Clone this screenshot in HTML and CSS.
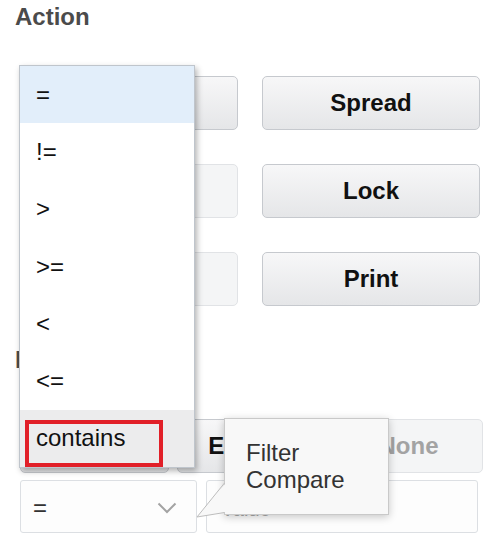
FILE: index.html
```html
<!DOCTYPE html>
<html lang="en">
<head>
<meta charset="utf-8">
<title>Action</title>
<link rel="stylesheet" href="styles.css">
</head>
<body>
<div class="page">
  <h2 class="heading">Action</h2>
  <div class="action-grid">
    <button class="btn">Run</button>
    <button class="btn">Spread</button>
    <button class="btn" disabled>Edit</button>
    <button class="btn">Lock</button>
    <button class="btn" disabled>Copy</button>
    <button class="btn">Print</button>
  </div>

  <h2 class="heading heading-second">Filter</h2>
  <div class="filter-buttons">
    <button class="btn">All</button>
    <button class="btn">Expand</button>
    <button class="btn" disabled>None</button>
  </div>
  <div class="filter-inputs">
    <div class="select">
      <span class="select-value">=</span>
      <svg class="chevron" width="20" height="12" viewBox="0 0 20 12"><polyline points="1.5,1.5 10,10 18.5,1.5" fill="none" stroke="#a3a3a3" stroke-width="2"/></svg>
    </div>
    <input class="text-input" type="text" placeholder="Value">
  </div>

  <ul class="dropdown">
    <li class="option option-active">=</li>
    <li class="option">!=</li>
    <li class="option">&gt;</li>
    <li class="option">&gt;=</li>
    <li class="option">&lt;</li>
    <li class="option">&lt;=</li>
    <li class="option option-hover">contains<span class="mark"></span></li>
  </ul>

  <svg class="tail" width="34" height="40" viewBox="0 0 34 40">
    <polygon points="31,3 2,37 31,32" fill="#f8f8f8"/>
    <polyline points="29.5,3 2,37 29.5,32.5" fill="none" stroke="#bdbdbd" stroke-width="1"/>
  </svg>
  <div class="tooltip">Filter<br>Compare</div>
</div>
</body>
</html>
```
FILE: styles.css
```css
html, body {
  margin: 0;
  padding: 0;
  background: #ffffff;
}

body {
  font-family: "Liberation Sans", Arial, Helvetica, sans-serif;
}

.page {
  position: relative;
  padding-top: 3px;
}

.heading {
  margin: 0;
  padding-left: 15px;
  font-size: 24px;
  line-height: 28px;
  font-weight: bold;
  color: #4b4b4b;
}

.heading-second {
  margin-top: 40px;
}

.action-grid {
  display: grid;
  grid-template-columns: 218px 218px;
  column-gap: 24px;
  row-gap: 34px;
  margin: 45px 0 0 20px;
}

.btn {
  box-sizing: border-box;
  height: 54px;
  margin: 0;
  padding: 0;
  border: 1px solid #c6c9ce;
  border-radius: 5px;
  background: linear-gradient(#f7f7f8, #e5e6e8);
  font-family: "Liberation Sans", Arial, Helvetica, sans-serif;
  font-size: 24px;
  font-weight: bold;
  color: #111111;
}

.btn:disabled {
  background: #f4f5f6;
  border-color: #e1e3e6;
  color: #a3a3a3;
}

.filter-buttons {
  display: flex;
  gap: 8px;
  width: 463px;
  margin: 45px 0 0 20px;
}

.filter-buttons .btn {
  flex: 1;
}

.filter-inputs {
  display: flex;
  gap: 9px;
  margin: 7px 0 0 20px;
}

.select {
  box-sizing: border-box;
  width: 177px;
  height: 53px;
  border: 1px solid #dcdfe3;
  border-radius: 3px;
  background: #fdfdfd;
  display: flex;
  align-items: center;
  justify-content: space-between;
  padding: 3px 19px 0 12px;
}

.select-value {
  font-size: 24px;
  color: #333333;
}

.chevron {
  display: block;
}

.text-input {
  box-sizing: border-box;
  width: 272px;
  height: 53px;
  margin: 0;
  border: 1px solid #dcdfe3;
  border-radius: 3px;
  background: #fdfdfd;
  padding: 6px 14px 0;
  font-family: "Liberation Sans", Arial, Helvetica, sans-serif;
  font-size: 20px;
}

.text-input::placeholder {
  color: #a8a8a8;
}

.dropdown {
  position: absolute;
  left: 19px;
  top: 65px;
  width: 174px;
  margin: 0;
  padding: 0;
  list-style: none;
  background: #ffffff;
  border: 1px solid #bfc5cc;
  box-shadow: 2px 3px 6px rgba(0, 0, 0, 0.3);
  z-index: 2;
}

.option {
  position: relative;
  height: 57.3px;
  display: flex;
  align-items: center;
  padding-left: 16px;
  font-size: 24px;
  color: #111111;
}

.option-active {
  background: #e2eefa;
}

.option-hover {
  background: #ececed;
}

.mark {
  position: absolute;
  left: 5px;
  top: 10px;
  width: 138px;
  height: 47px;
  box-sizing: border-box;
  border: 4px solid #e11f28;
}

.tooltip {
  position: absolute;
  left: 224px;
  top: 418px;
  box-sizing: border-box;
  width: 165px;
  height: 97px;
  padding: 20px 0 0 21px;
  background: #f8f8f8;
  border: 1px solid #c9c9c9;
  box-shadow: 0 2px 8px rgba(0, 0, 0, 0.22);
  font-size: 24px;
  line-height: 27px;
  color: #333333;
  z-index: 3;
}

.tail {
  position: absolute;
  left: 195px;
  top: 480px;
  z-index: 4;
}
```
